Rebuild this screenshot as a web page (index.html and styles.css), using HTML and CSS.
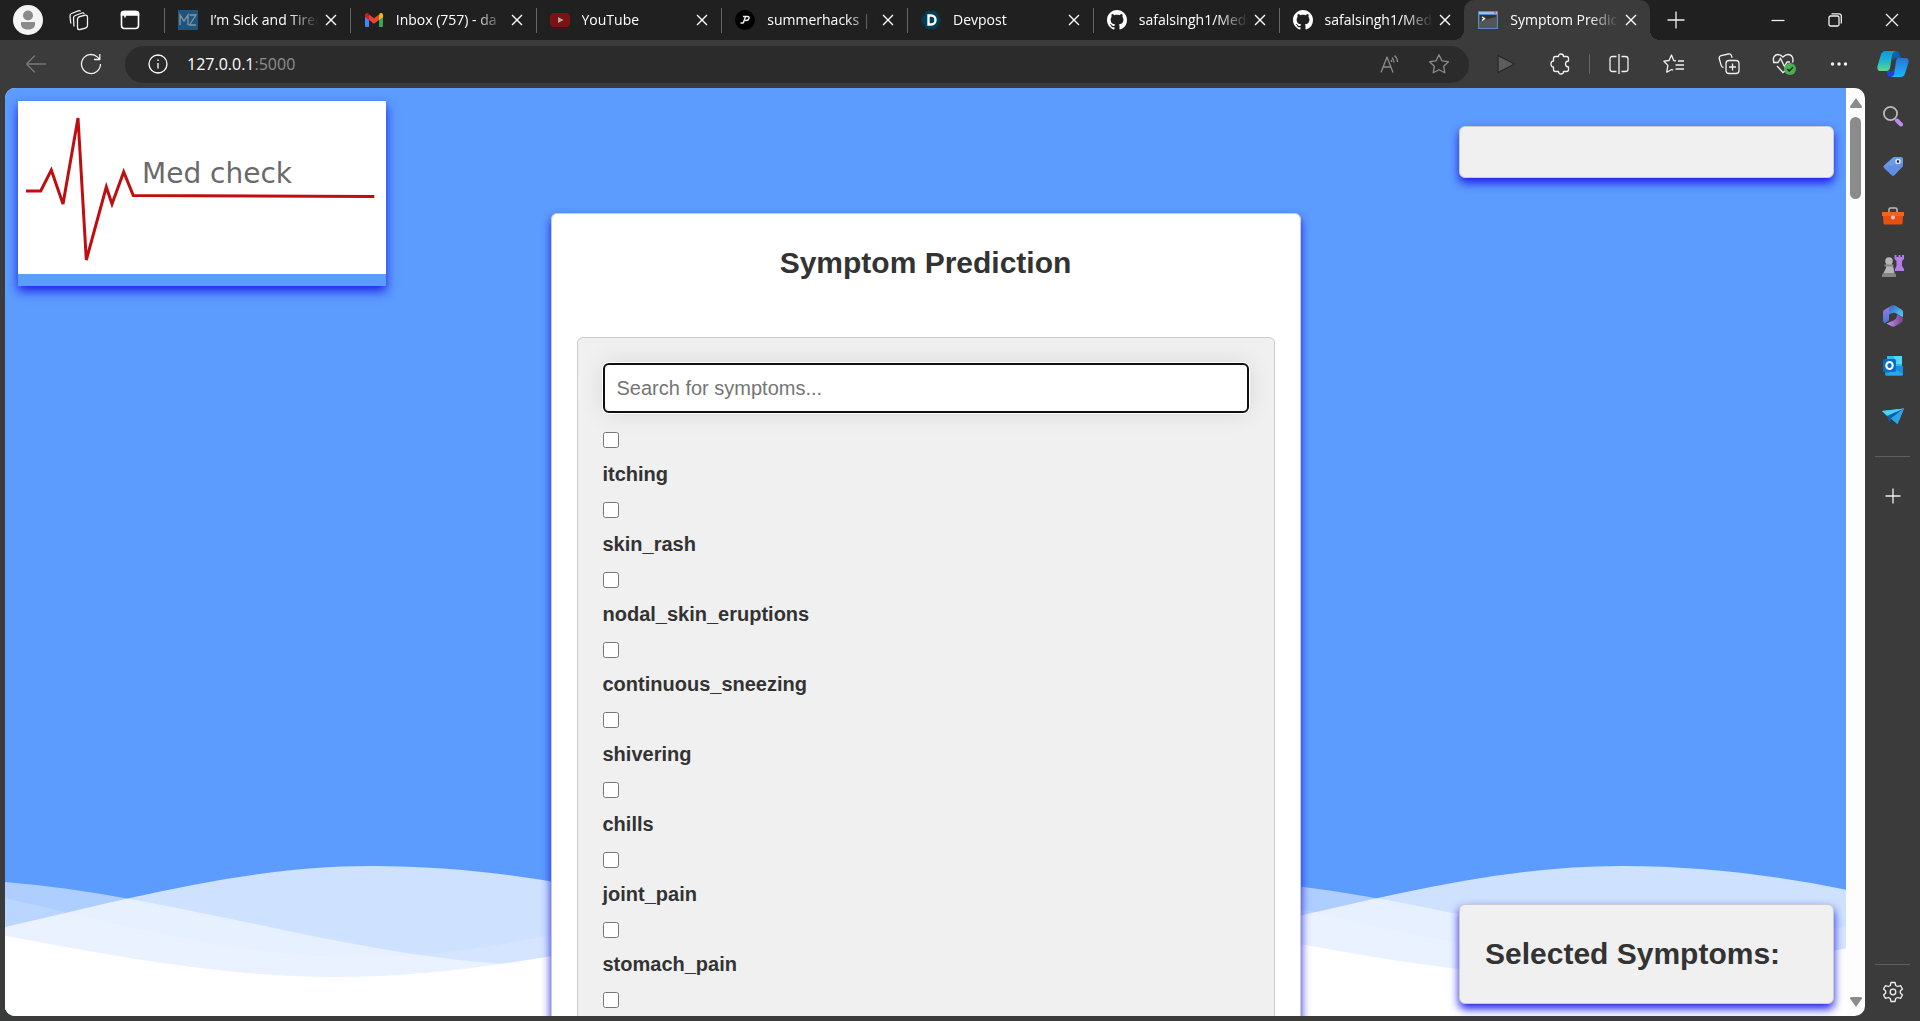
FILE: index.html
```html
<!DOCTYPE html>
<html lang="en">
<head>
  <meta charset="UTF-8" />
  <meta name="viewport" content="width=device-width, initial-scale=1.0"/>
  <title>Symptom Prediction</title>
  <link rel="stylesheet" href="styles.css">
</head>
<body>

  <header class="titlebar">
    <button class="title-btn" aria-label="Profile">
      <svg width="30" height="30" viewBox="0 0 30 30"><circle cx="15" cy="15" r="15" fill="#f5f5f5"/><circle cx="15" cy="10.500" r="5" fill="#8a8a8a"/><path d="M8 17h14v2.500c0 3-3 5-7 5s-7-2-7-5z" fill="#8a8a8a"/></svg>
    </button>
    <button class="title-btn" aria-label="Workspaces">
      <svg class="line" width="22" height="22" viewBox="0 0 22 22"><rect x="9.500" y="7" width="10" height="13" rx="2.500" transform="skewY(-14) translate(0 3.500)"/><path d="M6 17.500 5.500 9.500q-.2-2.300 1.800-3L14 4q1.500-.5 2.300.8"/><path d="M2.800 14.500 2 7.500q-.3-2.300 1.600-3l6.500-2.700q1.600-.6 2.500.6"/></svg>
    </button>
    <button class="title-btn" aria-label="Tab actions">
      <svg width="20" height="20" viewBox="0 0 20 20" fill="none" stroke="#fff" stroke-width="1.600"><rect x="1.500" y="1.500" width="17" height="17" rx="3"/><path d="M1.500 3.500q0-2 2-2h13q2 0 2 2V5h-17z" fill="#fff"/><path d="M5 5v2.500"/></svg>
    </button>

    <nav class="tabs">
      <div class="tab">
        <svg width="20" height="20" viewBox="0 0 20 20"><path fill="#1d557c" d="M0 0h20v20H0z"/><path d="M2 15V5l4 6 4-6v10M11.500 5H18l-6.500 10H18" fill="none" stroke="#8296a3" stroke-width="1.300"/></svg>
        <a href="#">I’m Sick and Tired</a>
        <button class="close" aria-label="Close tab"><svg width="12" height="12" viewBox="0 0 12 12"><path d="m1 1 10 10M11 1 1 11"/></svg></button>
      </div>
      <div class="tab">
        <svg width="20" height="20" viewBox="0 0 20 20"><path fill="#4285f4" d="M1 5v11q0 1 1 1h3V9z"/><path fill="#34a853" d="M19 5v11q0 1-1 1h-3V9z"/><path fill="#fbbc04" d="M15 5.500V10l4-3V5.200C19 3 17 2.500 15.500 3.600z"/><path fill="#c5221f" d="M5 5.500V10L1 7V5.200C1 3 3 2.500 4.500 3.600z"/><path fill="#ea4335" d="M5 10V4.500l5 3.700 5-3.700V10l-5 3.700z"/></svg>
        <a href="#">Inbox (757) - da</a>
        <button class="close" aria-label="Close tab"><svg width="12" height="12" viewBox="0 0 12 12"><path d="m1 1 10 10M11 1 1 11"/></svg></button>
      </div>
      <div class="tab">
        <svg width="20" height="20" viewBox="0 0 20 20"><rect y="3" width="20" height="14" rx="4" fill="#7d1214"/><path d="m8 7 5.500 3L8 13z" fill="#aaa"/></svg>
        <a href="#">YouTube</a>
        <button class="close" aria-label="Close tab"><svg width="12" height="12" viewBox="0 0 12 12"><path d="m1 1 10 10M11 1 1 11"/></svg></button>
      </div>
      <div class="tab">
        <svg width="20" height="20" viewBox="0 0 20 20"><circle cx="10" cy="10" r="10" fill="#000"/><path d="M8 6.500h4.500q2 0 1.500 2t-3 2H9M10.500 7 8.500 12M5.500 13h2.500l1-1.500" fill="none" stroke="#eee" stroke-width="1.400"/></svg>
        <a href="#">summerhacks | d</a>
        <button class="close" aria-label="Close tab"><svg width="12" height="12" viewBox="0 0 12 12"><path d="m1 1 10 10M11 1 1 11"/></svg></button>
      </div>
      <div class="tab">
        <svg width="20" height="20" viewBox="0 0 20 20"><path fill="#003e54" d="M5 1h10l5 9-5 9H5l-5-9z"/><path d="M7.500 5.500H10c6 0 6 9 0 9H7.500z" fill="none" stroke="#fff" stroke-width="2.400"/></svg>
        <a href="#">Devpost</a>
        <button class="close" aria-label="Close tab"><svg width="12" height="12" viewBox="0 0 12 12"><path d="m1 1 10 10M11 1 1 11"/></svg></button>
      </div>
      <div class="tab">
        <svg width="20" height="20" viewBox="0 0 16 16"><path fill="#fff" d="M8 0C3.580 0 0 3.580 0 8c0 3.540 2.290 6.530 5.470 7.590.4.070.55-.17.55-.38 0-.19-.01-.82-.01-1.490-2.010.37-2.530-.49-2.690-.94-.09-.23-.48-.94-.82-1.130-.28-.15-.68-.52-.01-.53.63-.01 1.080.58 1.230.82.72 1.210 1.870.87 2.330.66.070-.52.28-.87.51-1.070-1.780-.2-3.640-.89-3.640-3.950 0-.87.31-1.590.82-2.150-.08-.2-.36-1.020.08-2.120 0 0 .67-.21 2.200.82.64-.18 1.320-.27 2-.27s1.360.09 2 .27c1.530-1.040 2.200-.82 2.200-.82.44 1.100.16 1.920.08 2.120.51.56.82 1.270.82 2.150 0 3.070-1.870 3.750-3.650 3.950.29.25.54.73.54 1.480 0 1.070-.01 1.930-.01 2.200 0 .21.15.46.55.38A8 8 0 0 0 16 8c0-4.420-3.580-8-8-8z"/></svg>
        <a href="#">safalsingh1/Med</a>
        <button class="close" aria-label="Close tab"><svg width="12" height="12" viewBox="0 0 12 12"><path d="m1 1 10 10M11 1 1 11"/></svg></button>
      </div>
      <div class="tab">
        <svg width="20" height="20" viewBox="0 0 16 16"><path fill="#fff" d="M8 0C3.580 0 0 3.580 0 8c0 3.540 2.290 6.530 5.470 7.590.4.070.55-.17.55-.38 0-.19-.01-.82-.01-1.490-2.010.37-2.530-.49-2.690-.94-.09-.23-.48-.94-.82-1.130-.28-.15-.68-.52-.01-.53.63-.01 1.080.58 1.230.82.72 1.210 1.870.87 2.330.66.070-.52.28-.87.51-1.070-1.780-.2-3.640-.89-3.640-3.950 0-.87.31-1.590.82-2.150-.08-.2-.36-1.020.08-2.120 0 0 .67-.21 2.200.82.64-.18 1.320-.27 2-.27s1.360.09 2 .27c1.530-1.040 2.200-.82 2.200-.82.44 1.100.16 1.920.08 2.120.51.56.82 1.270.82 2.150 0 3.070-1.870 3.750-3.650 3.950.29.25.54.73.54 1.480 0 1.070-.01 1.930-.01 2.200 0 .21.15.46.55.38A8 8 0 0 0 16 8c0-4.420-3.580-8-8-8z"/></svg>
        <a href="#">safalsingh1/Med</a>
        <button class="close" aria-label="Close tab"><svg width="12" height="12" viewBox="0 0 12 12"><path d="m1 1 10 10M11 1 1 11"/></svg></button>
      </div>
      <div class="tab active">
        <svg width="20" height="20" viewBox="0 0 20 20"><path fill="#5b87c5" d="M0 1h20v18H0z"/><path fill="#9dbfe8" d="M1 2h18v2H1z"/><path fill="#333" d="M1.500 5h17v12.500h-17z"/><path fill="#555" d="M1.500 11 18.500 7v10.500h-17z"/><path fill="#e06050" d="M16 2h2v1.500h-2z"/><path d="m4 7 2.500 1.500L4 10.500" fill="none" stroke="#fff" stroke-width="1.400"/></svg>
        <a href="#">Symptom Predic</a>
        <button class="close" aria-label="Close tab"><svg width="12" height="12" viewBox="0 0 12 12"><path d="m1 1 10 10M11 1 1 11"/></svg></button>
      </div>
    </nav>
    <button class="title-btn" aria-label="New tab">
      <svg class="line" width="18" height="18" viewBox="0 0 18 18"><path d="M9 .5v17M.5 9h17"/></svg>
    </button>
    <div class="window-controls">
      <button aria-label="Minimize"><svg class="line" width="14" height="14" viewBox="0 0 14 14"><path d="M.5 7.500h13"/></svg></button>
      <button aria-label="Restore"><svg class="line" width="14" height="14" viewBox="0 0 14 14"><rect x="1" y="3" width="10" height="10" rx="1.500"/><path d="M3.500.8H11q2.300 0 2.300 2.300V10.500"/></svg></button>
      <button aria-label="Close"><svg class="line" width="14" height="14" viewBox="0 0 14 14"><path d="m1 1 12 12M13 1 1 13"/></svg></button>
    </div>
  </header>

  <div class="toolbar">
    <button class="tool-btn dim" aria-label="Back"><svg class="line" width="22" height="20" viewBox="0 0 22 20"><path d="M21 10H1.500M10 1.500 1.500 10l8.500 8.500"/></svg></button>
    <button class="tool-btn" aria-label="Refresh"><svg class="line" width="22" height="22" viewBox="0 0 22 22"><path d="M20.500 11a9.500 9.500 0 1 1-3-6.900L19.500 6M19.800 1v5.500H14"/></svg></button>

    <div class="address">
      <svg class="line" width="20" height="20" viewBox="0 0 20 20"><circle cx="10" cy="10" r="9"/><path d="M10 9v5.500M10 5.500v1.600"/></svg>
      <p class="url">127.0.0.1<span>:5000</span></p>
      <button class="dim" aria-label="Read aloud"><svg class="line" width="22" height="20" viewBox="0 0 22 20"><path d="M2 18.500 8 3l6 15.500M4.200 13h7.600M13 3.500q2 2 2 5M15.500 1.500q3 2.500 3 6.500M12 6q.8 1 .8 2"/></svg></button>
      <button class="dim" aria-label="Add to favorites"><svg class="line" width="22" height="22" viewBox="0 0 22 22"><path d="m11 1.800 2.900 6 6.500.9-4.700 4.600 1.100 6.500-5.800-3.100-5.800 3.100 1.100-6.500-4.700-4.600 6.500-.9z"/></svg></button>
    </div>

    <button class="tool-btn" aria-label="Extension"><svg width="20" height="22" viewBox="0 0 20 22"><path d="M2 2.500 18.500 11 2 19.500z" fill="#5c5c5c" stroke="#262626" stroke-width="1.200"/></svg></button>
    <button class="tool-btn" aria-label="Extensions"><svg class="line" width="22" height="22" viewBox="0 0 22 22"><path d="M5.500 3.500h3q0-2.500 2.500-2.500t2.500 2.500h3q2 0 2 2V8q-3 0-3 3t3 3v2.500q0 2-2 2h-3q0 2.500-2.500 2.500t-2.500-2.500h-3q-2 0-2-2V14Q1 14 1 11t2.500-3V5.500q0-2 2-2z"/></svg></button>
    <span class="divider"></span>
    <button class="tool-btn" aria-label="Split screen"><svg class="line" width="20" height="20" viewBox="0 0 20 20"><path d="M10 0v20M7.500 2.500h-4q-2.500 0-2.500 2.500v10q0 2.500 2.500 2.500h4M12.500 2.500h4q2.500 0 2.500 2.500v10q0 2.500-2.500 2.500h-4"/></svg></button>
    <button class="tool-btn" aria-label="Favorites"><svg class="line" width="22" height="20" viewBox="0 0 22 20"><path d="M13 6.800 10.700 6.500 8.500 1 6 6.500.9 7.200l4 4.200-1.200 6.800 5-2.700 1.500.8M15 7h6M12.500 11H21M12.500 15H21"/></svg></button>
    <button class="tool-btn" aria-label="Collections"><svg class="line" width="22" height="22" viewBox="0 0 22 22"><rect x="8" y="7.500" width="13" height="13" rx="3"/><path d="M14.500 10.500v7M11 14h7M5.500 14.500q-1.800-.4-2.300-2.200L1.200 5.500Q.8 3.400 3 2.600L10.500 1q2.300-.4 3 1.800l.6 2"/></svg></button>
    <button class="tool-btn" aria-label="Browser essentials"><svg width="24" height="22" viewBox="0 0 24 22"><g fill="none" stroke="#eee" stroke-width="1.400"><path d="M2 9C0 4.500 3 1.500 6 1.500q2.500 0 5 2.600 2.500-2.600 5-2.600c4 0 6 4 4.500 8M5 13l6 6.500 2-1.500"/><path d="M1 9.500h5l2.500-4 4 8 2.500-4.500h3"/></g><circle cx="18" cy="16" r="6" fill="#4caf50"/><path d="m15.300 16 2 2 3.500-3.800" fill="none" stroke="#222" stroke-width="1.400"/></svg></button>
    <button class="tool-btn" aria-label="More"><svg width="18" height="6" viewBox="0 0 18 6" fill="#f2f2f2"><circle cx="2.500" cy="3" r="1.700"/><circle cx="9" cy="3" r="1.700"/><circle cx="15.500" cy="3" r="1.700"/></svg></button>
    <button class="tool-btn copilot" aria-label="Copilot"><svg width="32" height="28" viewBox="0 0 32 28">
      <defs>
        <linearGradient id="cpA" x1="0" y1="0" x2="0" y2="1"><stop offset="0" stop-color="#1396d8"/><stop offset=".5" stop-color="#1fb5cf"/><stop offset="1" stop-color="#5fd889"/></linearGradient>
        <linearGradient id="cpB" x1="0" y1="0" x2="0" y2="1"><stop offset="0" stop-color="#2a72dc"/><stop offset="1" stop-color="#18b8f7"/></linearGradient>
      </defs>
      <path fill="#0b62a8" d="M13 1h6q3 0 3.500 2.500L24 8h-5q-2.500 0-3 3z"/>
      <path fill="#1a45d8" d="M9 21h7l3-5-2 11h-3q-3 0-3.500-2.500z"/>
      <path fill="url(#cpA)" d="M8.500 1H19q-3 .5-3.800 3.500L13 18q-.8 3-3.500 3H4q-4.500 0-3.500-5L4 4.500Q5 1 8.500 1z"/>
      <path fill="url(#cpB)" d="M21 8h7q4.500 0 3.500 4.500l-3.500 11q-1 3.500-4.500 3.500H14q2.500-.3 3.200-3L19 11q.5-3 2-3z"/>
    </svg></button>
  </div>

  <div class="browser-body">
    <div class="viewport">
      <div class="page">
        <svg class="waves" viewBox="0 0 1841 150" preserveAspectRatio="none">
          <path fill-opacity=".7" d="M-259 97c213 0 412-97 625-97 260 0 420 97 625 97s412-97 625-97c260 0 420 97 625 97v60H-259z"/>
          <path fill-opacity=".5" d="M-70 13c213 0 412 87 625 87s412-87 625-87 412 87 625 87v60H-70z"/>
          <path fill-opacity=".15" d="M-270-7c213 0 412 98 625 98s412-98 625-98 412 98 625 98 412-98 625-98v170H-270z"/>
          <path d="M-295 35c213 0 412 76 625 76s412-76 625-76 412 76 625 76 412-76 625-76v120H-295z"/>
        </svg>

        <div class="logo">
          <svg viewBox="0 0 368 173">
            <path fill="#fff" d="M0 0h368v173H0z"/>
            <path class="pulse" d="M8 90h14.700L33.300 69 45 103l15-86 8.300 142 20-73 5.700 17 11.700-32 9.600 23.500 241 1"/>
            <text x="124" y="82">Med check</text>
          </svg>
        </div>

        <div class="panel prediction"></div>

        <main class="container">
          <h1>Symptom Prediction</h1>
          <form class="symptom-form">
            <input class="search" type="text" placeholder="Search for symptoms..." aria-label="Search for symptoms" autofocus>
            <div class="symptom"><input type="checkbox" id="itching"><label for="itching">itching</label></div>
            <div class="symptom"><input type="checkbox" id="skin_rash"><label for="skin_rash">skin_rash</label></div>
            <div class="symptom"><input type="checkbox" id="nodal_skin_eruptions"><label for="nodal_skin_eruptions">nodal_skin_eruptions</label></div>
            <div class="symptom"><input type="checkbox" id="continuous_sneezing"><label for="continuous_sneezing">continuous_sneezing</label></div>
            <div class="symptom"><input type="checkbox" id="shivering"><label for="shivering">shivering</label></div>
            <div class="symptom"><input type="checkbox" id="chills"><label for="chills">chills</label></div>
            <div class="symptom"><input type="checkbox" id="joint_pain"><label for="joint_pain">joint_pain</label></div>
            <div class="symptom"><input type="checkbox" id="stomach_pain"><label for="stomach_pain">stomach_pain</label></div>
            <div class="symptom"><input type="checkbox" id="acidity"><label for="acidity">acidity</label></div>
          </form>
        </main>

        <div class="panel selected">
          <h2>Selected Symptoms:</h2>
        </div>
      </div>

      <div class="scrollbar">
        <svg width="12" height="10" viewBox="0 0 12 10"><path d="M6 0 12 8.500Q12 10 11 10H1Q0 10 0 8.500z"/></svg>
        <div class="thumb"></div>
        <svg class="down" width="12" height="10" viewBox="0 0 12 10"><path d="M6 10 12 1.500Q12 0 11 0H1Q0 0 0 1.500z"/></svg>
      </div>
    </div>

    <aside class="sidebar">
      <button aria-label="Search"><svg width="22" height="22" viewBox="0 0 22 22"><circle cx="8.500" cy="8.500" r="6.600" fill="none" stroke="#b8b8b8" stroke-width="1.800"/><path d="m15 15.500 4 4" stroke="#c08bf0" stroke-width="4" stroke-linecap="round"/></svg></button>
      <button aria-label="Shopping"><svg width="22" height="22" viewBox="0 0 22 22"><path d="M11.500 2H19q2 0 2 2v7l-8.500 9q-1.500 1.500-3 0l-7.500-7q-1.300-1.300 0-2.600z" fill="#6c9bea"/><path d="m2 11.500 7.500-1L21 8v3l-8.500 9q-1.500 1.500-3 0l-7.500-7z" fill="#5a84dc" opacity=".6"/><circle cx="16" cy="6.500" r="2" fill="#222" stroke="#dde8ff" stroke-width="1.400"/></svg></button>
      <button aria-label="Tools"><svg width="22" height="20" viewBox="0 0 22 20"><path d="M7 6V3.500Q7 2 8.500 2h5Q15 2 15 3.500V6" fill="none" stroke="#bbb" stroke-width="1.500"/><path fill="#e8500f" d="M1 10h20l-.5 7q0 1.500-1.500 1.500H3q-1.500 0-1.500-1.500z"/><path fill="#f0641c" d="M0 6h22v4H0z"/><circle cx="11" cy="11.500" r="2" fill="#ccc"/></svg></button>
      <button aria-label="Games"><svg width="22" height="24" viewBox="0 0 22 24"><path fill="#b57be8" d="M12.500 1h2v2h2V1h2v2h1.500V1h2v4l-2 2v5l2 3v2h-9v-2l1.500-3V7l-2-2z"/><g fill="#b5b5b5"><circle cx="7" cy="7" r="3.800"/><path d="M4.500 9h5l2 5 1 5h-11l2.500-5z"/></g><path fill="#858585" d="M2.500 10.500h9v2h-9zM0 22q0-3 2-3h10q2 0 2 3v1H0z"/></svg></button>
      <button aria-label="Microsoft 365"><svg width="22" height="22" viewBox="0 0 22 22">
        <defs>
          <linearGradient id="msA" x1="0" y1="0" x2="0" y2="1"><stop offset="0" stop-color="#a878dc"/><stop offset="1" stop-color="#4178d8"/></linearGradient>
          <linearGradient id="msB" x1="0" y1="0" x2="1" y2="1"><stop offset="0" stop-color="#3660c8"/><stop offset="1" stop-color="#58d8f8"/></linearGradient>
          <linearGradient id="msC" x1="0" y1="0" x2="1" y2="0"><stop offset="0" stop-color="#c896ee"/><stop offset="1" stop-color="#70408f"/></linearGradient>
        </defs>
        <path fill="url(#msA)" d="m10 .5-7.500 4.200Q1 5.600 1 7.300v8q0 1.800 1.800 3l4.200-2.800V7.500q0-2 1-3z"/><path fill="url(#msB)" d="M10 .5q1.500-.7 3 .1l6.500 3.800Q21 5.300 21 7v5.500L13.500 8Q11 6.800 7 9.500V5q0-3 3-4.500z"/><path fill="url(#msC)" d="M21 11v4q0 1.800-1.500 2.600L13 21.300q-1.800.9-3.500 0L4.500 18.500l8-3.500q2.500-1.500 2.500-5.500l5 2.500z"/></svg></button>
      <button aria-label="Outlook"><svg width="22" height="22" viewBox="0 0 22 22"><path fill="#35b8f1" d="M5 1h14q1 0 1 1v10H5z"/><path fill="#50d9ff" d="M12 1h8v8h-8z"/><path fill="#1490df" d="M3 11h18v8q0 1.500-1.500 1.500H4.500Q3 20.500 3 19z"/><path fill="#28a8ea" d="m3 20 10-6 8 5q0 1.500-1.500 1.500h-15z"/><rect y="4" x="1" width="13" height="13" rx="1.500" fill="#0a6cc9"/><ellipse cx="7.500" cy="10.500" rx="3.200" ry="3.600" fill="none" stroke="#fff" stroke-width="2"/></svg></button>
      <button aria-label="Drop"><svg width="22" height="18" viewBox="0 0 22 18"><path fill="#38b8f0" d="M0 4 22 1.500 15.500 17z"/><path fill="#4fd0fa" d="M0 4 22 1.500 5 9z"/><path fill="#0f5fa8" d="M5 9 22 1.500 9 11.500 7.500 16z"/><path fill="#2aa4e8" d="m9 11.500 13-10L15.500 17z"/></svg></button>
      <hr>
      <button class="add" aria-label="Customize"><svg class="line" width="16" height="16" viewBox="0 0 16 16"><path d="M8 .5v15M.5 8h15"/></svg></button>
      <hr class="bottom">
      <button aria-label="Settings"><svg class="line" width="22" height="22" viewBox="0 0 22 22"><path d="M9 1.500h4l.7 3 1.800 1 3-.9 2 3.400-2.200 2v2l2.200 2-2 3.400-3-.9-1.800 1-.7 3H9l-.7-3-1.800-1-3 .9-2-3.400 2.200-2v-2l-2.200-2 2-3.400 3 .9 1.800-1z"/><circle cx="11" cy="11" r="2.800"/></svg></button>
    </aside>
  </div>

</body>
</html>
```
FILE: styles.css
```css
* {
  box-sizing: border-box;
}

body {
  margin: 0;
  height: 100vh;
  display: flex;
  flex-direction: column;
  overflow: hidden;
  background-color: #3b3b3b;
  font-family: "Open Sans", "Noto Sans", sans-serif;
}

button {
  display: flex;
  align-items: center;
  justify-content: center;
  padding: 0;
  border: none;
  background: none;
  color: #f0f0f0;
}

svg {
  flex-shrink: 0;
}

.line {
  fill: none;
  stroke: currentColor;
  stroke-width: 1.3;
  stroke-linejoin: round;
}

.dim {
  color: #8c8c8c;
}

/* Title bar */
.titlebar {
  display: flex;
  height: 40px;
  padding-left: 2px;
  background-color: #202020;
}

.title-btn {
  width: 51px;
}

.tabs {
  display: flex;
  flex: 0 1 1486px;
  min-width: 0;
  margin-left: 9px;
}

.tab {
  position: relative;
  display: flex;
  align-items: center;
  flex: 1 1 0;
  min-width: 0;
  padding: 0 13px 0 14px;
}

.tab::before {
  content: "";
  position: absolute;
  left: 0;
  top: 8px;
  width: 1px;
  height: 25px;
  background-color: #666;
}

.tab a {
  flex: 1;
  margin: 0 6px 0 12px;
  overflow: hidden;
  white-space: nowrap;
  font-size: 14px;
  line-height: 20px;
  color: #fff;
  text-decoration: none;
  mask-image: linear-gradient(to left, transparent, #000 30px);
}

.close {
  width: 12px;
  height: 12px;
}

.close path {
  stroke: #fff;
  stroke-width: 1.4;
}

.tab.active {
  background-color: #3b3b3b;
  border-radius: 10px 10px 0 0;
}

.tab.active::before,
.tab.active::after {
  content: "";
  position: absolute;
  top: auto;
  bottom: 0;
  width: 10px;
  height: 10px;
}

.tab.active::before {
  left: -10px;
  background: radial-gradient(circle at 0 0, #202020 10px, #3b3b3b 10px);
}

.tab.active::after {
  right: -10px;
  background: radial-gradient(circle at 100% 0, #202020 10px, #3b3b3b 10px);
}

.window-controls {
  display: flex;
  margin-left: auto;
}

.window-controls button {
  width: 57px;
}

/* Toolbar */
.toolbar {
  display: flex;
  align-items: center;
  height: 48px;
  padding-left: 8px;
}

.tool-btn {
  width: 55px;
  height: 38px;
}

.tool-btn.dim {
  color: #777;
}

.copilot {
  width: 54px;
}

.divider {
  width: 1px;
  height: 20px;
  margin: 0 1px;
  background-color: #666;
}

.address {
  display: flex;
  align-items: center;
  flex: 1;
  height: 37px;
  margin: 0 9px 0 7px;
  padding: 0 6px 0 23px;
  border-radius: 19px;
  background-color: #2b2b2b;
  color: #fff;
}

.address button {
  width: 49px;
}

.url {
  flex: 1;
  margin: 0 0 0 19px;
  font-size: 16px;
  line-height: 24px;
}

.url span {
  color: #8f8f8f;
}

/* Page area */
.browser-body {
  display: flex;
  flex: 1;
  min-height: 0;
}

.viewport {
  display: flex;
  flex: 1;
  margin: 0 0 5px 5px;
  border-radius: 10px;
  overflow: hidden;
  background-color: #fdfdfd;
}

.page {
  position: relative;
  flex: 1;
  overflow: hidden;
  background-color: #5c9cff;
  color: #333;
  font-family: Arial, "Liberation Sans", sans-serif;
}

.waves {
  position: absolute;
  left: 0;
  bottom: 0;
  width: 100%;
  height: 150px;
  fill: #fff;
}

.logo {
  position: absolute;
  left: 13px;
  top: 13px;
  width: 368px;
  padding-bottom: 12px;
  background-color: #5c9cff;
  box-shadow: 0 5px 10px #1e1ee6;
}

.logo svg {
  display: block;
}

.logo text {
  fill: #6a6a6a;
  font-family: "DejaVu Sans", sans-serif;
  font-size: 28px;
}

.pulse {
  fill: none;
  stroke: #c00d10;
  stroke-width: 3;
}

.panel {
  position: absolute;
  right: 12px;
  width: 375px;
  padding: 25px;
  border: 1px solid #ccc;
  border-radius: 6px;
  background-color: #f0f0f0;
  box-shadow: 0 5px 10px #1e1ee6;
}

.prediction {
  top: 38px;
}

.selected {
  bottom: 12px;
}

.container {
  position: relative;
  max-width: 750px;
  margin: 125px auto 0;
  padding: 25px;
  border: 1px solid #ccc;
  border-radius: 6px;
  background-color: #fff;
  box-shadow: 0 5px 10px #1e1ee6;
}

h1,
h2 {
  margin: 0;
  font-size: 30px;
  line-height: 48px;
}

h1 {
  margin-bottom: 50px;
  text-align: center;
}

.symptom-form {
  padding: 25px;
  border: 1px solid #ccc;
  border-radius: 6px;
  background-color: #f0f0f0;
}

.search {
  display: block;
  width: 100%;
  height: 50px;
  margin-bottom: 19px;
  padding: 0 12px;
  border: 2px solid #101010;
  border-radius: 6px;
  outline: none;
  background-color: #fff;
  box-shadow: 0 0 0 1px #fff, 0 0 25px rgba(0, 0, 0, 0.1);
  font-family: inherit;
  font-size: 20px;
}

.symptom {
  display: flex;
  flex-direction: column;
  align-items: flex-start;
  gap: 14px;
  margin-bottom: 16px;
}

.symptom input {
  width: 16px;
  height: 16px;
  margin: 0;
}

.symptom label {
  font-size: 20px;
  font-weight: bold;
  line-height: 24px;
}

.scrollbar {
  display: flex;
  flex-direction: column;
  align-items: center;
  width: 19px;
  padding: 10px 0 9px;
  fill: #8b8b8b;
}

.thumb {
  width: 11px;
  height: 82px;
  margin-top: 9px;
  border-radius: 6px;
  background-color: #8b8b8b;
}

.down {
  margin-top: auto;
}

/* Edge sidebar */
.sidebar {
  display: flex;
  flex-direction: column;
  align-items: center;
  width: 55px;
  padding: 3px 0 4px;
}

.sidebar button {
  width: 50px;
  height: 50px;
}

.sidebar hr {
  width: 35px;
  margin: 15px 0 14px;
  border: none;
  border-top: 1px solid #5e5e5e;
}

.sidebar .bottom {
  margin: auto 0 2px;
}
```
